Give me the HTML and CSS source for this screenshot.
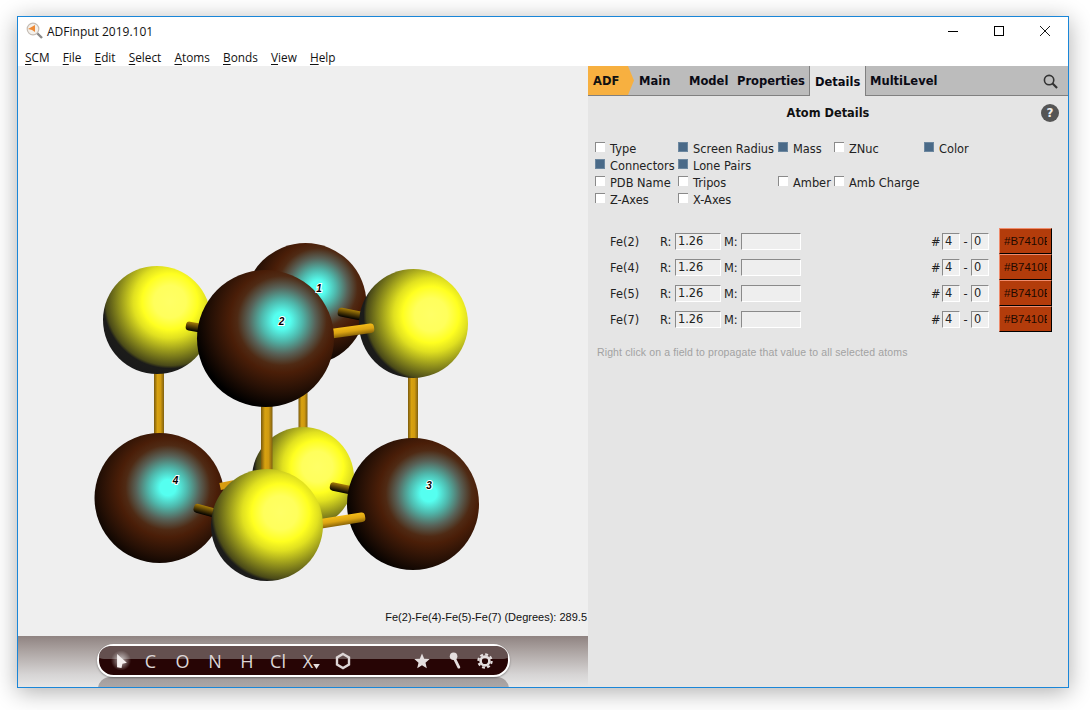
FILE: index.html
```html
<!DOCTYPE html>
<html lang="en">
<head>
<meta charset="utf-8">
<title>ADFinput 2019.101</title>
<link rel="stylesheet" href="styles.css">
</head>
<body>
<div class="window">
  <header class="titlebar">
    <svg class="appicon" viewBox="0 0 18 18" width="18" height="18">
      <line x1="10" y1="10" x2="16" y2="16" stroke="#8a8a8a" stroke-width="2.4"/>
      <circle cx="7" cy="7" r="5.8" fill="#f4f0ea" stroke="#c4bcb4" stroke-width="1.2"/>
      <polygon points="2,7 9,3 9,10 6,8" fill="#ee8a35"/>
    </svg>
    <span class="apptitle">ADFinput 2019.101</span>
    <div class="winctrls">
      <span class="winbtn"><svg viewBox="0 0 10 10" width="10" height="10"><line x1="0" y1="5.5" x2="10" y2="5.5" stroke="#000"/></svg></span>
      <span class="winbtn"><svg viewBox="0 0 10 10" width="10" height="10"><rect x=".5" y=".5" width="9" height="9" fill="none" stroke="#000"/></svg></span>
      <span class="winbtn"><svg viewBox="0 0 10 10" width="10" height="10"><path d="M0 0L10 10M10 0L0 10" stroke="#000" stroke-width=".9"/></svg></span>
    </div>
  </header>
  <nav class="menubar">
    <span><u>S</u>CM</span><span><u>F</u>ile</span><span><u>E</u>dit</span><span><u>S</u>elect</span><span><u>A</u>toms</span><span><u>B</u>onds</span><span><u>V</u>iew</span><span><u>H</u>elp</span>
  </nav>
  <main class="content">
    <section class="viewer">
      <div class="canvas">
        <svg class="molecule" viewBox="0 0 570 570" width="570" height="570">
          <defs>
            <radialGradient id="yel" cx=".62" cy=".33" r=".68">
              <stop offset="0" stop-color="#ffff66"/>
              <stop offset=".22" stop-color="#ffff5c"/>
              <stop offset=".38" stop-color="#ffff20"/>
              <stop offset=".5" stop-color="#e0e020"/>
              <stop offset=".68" stop-color="#96961c"/>
              <stop offset=".87" stop-color="#4a4a18"/>
              <stop offset=".91" stop-color="#1c1c1a"/>
              <stop offset="1" stop-color="#1a1a1a"/>
            </radialGradient>
            <radialGradient id="yelR" href="#yel" cx=".66" cy=".42"/>
            <radialGradient id="yelB" href="#yel" cx=".64" cy=".39"/>
            <radialGradient id="yelF" href="#yel" cx=".62" cy=".39"/>
            <radialGradient id="fe" cx=".62" cy=".37" r=".68">
              <stop offset="0" stop-color="#55fff0"/>
              <stop offset=".09" stop-color="#55fff0"/>
              <stop offset=".22" stop-color="#4fb8ac"/>
              <stop offset=".36" stop-color="#586258"/>
              <stop offset=".48" stop-color="#4f2a14"/>
              <stop offset=".56" stop-color="#4a1e08"/>
              <stop offset=".76" stop-color="#261005"/>
              <stop offset=".96" stop-color="#000"/>
            </radialGradient>
            <radialGradient id="fe1" href="#fe" cx=".6" cy=".37"/>
            <radialGradient id="fe3" href="#fe" cx=".62" cy=".42"/>
            <radialGradient id="fe4" href="#fe" cx=".565" cy=".42"/>
            <linearGradient id="stickV">
              <stop offset="0" stop-color="#7a5a0c"/>
              <stop offset=".35" stop-color="#d8a210"/>
              <stop offset=".65" stop-color="#d09a10"/>
              <stop offset="1" stop-color="#806010"/>
            </linearGradient>
            <linearGradient id="stickB" x1="0" y1="0" x2="0" y2="1">
              <stop offset="0" stop-color="#f4bc18"/>
              <stop offset=".5" stop-color="#dca412"/>
              <stop offset="1" stop-color="#8a6408"/>
            </linearGradient>
            <linearGradient id="stickD" x1="0" y1="0" x2="0" y2="1">
              <stop offset="0" stop-color="#a87e08"/>
              <stop offset=".55" stop-color="#4a3604"/>
              <stop offset="1" stop-color="#000"/>
            </linearGradient>
          </defs>
          <g transform="translate(-18 -66)">
            <circle cx="305.5" cy="304" r="61" fill="url(#fe1)"/>
            <rect x="154" y="368" width="10" height="70" fill="url(#stickV)"/>
            <rect x="408" y="372" width="10" height="70" fill="url(#stickV)"/>
            <rect x="298.500" y="390" width="9" height="42" fill="url(#stickV)"/>
            <circle cx="157" cy="320" r="54" fill="url(#yel)"/>
            <rect x="186" y="321" width="20" height="9" rx="3.500" fill="url(#stickD)" transform="rotate(10 186 325)"/>
            <circle cx="303" cy="478" r="51" fill="url(#yelB)"/>
            <rect x="261" y="400" width="11.500" height="75" fill="url(#stickV)"/>
            <rect x="338" y="307" width="30" height="9" rx="3.500" fill="url(#stickD)" transform="rotate(11 338 311)"/>
            <circle cx="413.500" cy="323.500" r="54.500" fill="url(#yelR)"/>
            <rect x="325" y="323" width="49" height="9.500" rx="3.500" fill="url(#stickB)" transform="rotate(-8 374 327)"/>
            <circle cx="265.500" cy="338.500" r="68.500" fill="url(#fe)"/>
            <rect x="330" y="482" width="28" height="8.500" rx="3.500" fill="url(#stickD)" transform="rotate(12 332 486)"/>
            <circle cx="413" cy="504" r="66" fill="url(#fe3)"/>
            <rect x="312" y="512" width="53" height="9.500" rx="3.500" fill="url(#stickB)" transform="rotate(-9 365 516)"/>
            <circle cx="159.500" cy="498" r="65" fill="url(#fe4)"/>
            <rect x="220" y="483" width="14" height="7" fill="#d89c10" transform="rotate(-12 220 486)"/>
            <rect x="194" y="503" width="30" height="9" rx="3.500" fill="url(#stickD)" transform="rotate(15 194 507)"/>
            <circle cx="267" cy="525" r="56" fill="url(#yelF)"/>
            <text class="atomno" x="319" y="292">1</text>
            <text class="atomno" x="281.500" y="325">2</text>
            <text class="atomno" x="429" y="489">3</text>
            <text class="atomno" x="175.500" y="484">4</text>
          </g>
        </svg>
        <p class="status">Fe(2)-Fe(4)-Fe(5)-Fe(7) (Degrees): 289.5</p>
      </div>
      <div class="toolbar">
        <div class="pill-reflect"></div>
        <div class="pill">
          <span class="tool tool-arrow"><svg viewBox="0 0 14 18" width="13" height="16"><polygon points="2,1 13,11 8,12 7,17 2,16" fill="#f4efef"/></svg></span>
          <span class="tool">C</span>
          <span class="tool">O</span>
          <span class="tool">N</span>
          <span class="tool">H</span>
          <span class="tool">Cl</span>
          <span class="tool tool-x">X<svg class="tri" viewBox="0 0 8 6" width="7" height="5"><polygon points="0,0 8,0 4,6" fill="#e4dede"/></svg></span>
          <span class="tool"><svg viewBox="0 0 16 18" width="16" height="18"><polygon points="8,2 14,5.500 14,12.500 8,16 2,12.500 2,5.500" fill="none" stroke="#ddd6d6" stroke-width="2.400"/></svg></span>
          <span class="tool-gap"></span>
          <span class="tool"><svg viewBox="0 0 16 16" width="16" height="16"><polygon points="8,.5 10.200,5.700 15.700,6.100 11.500,9.700 12.800,15.200 8,12.300 3.200,15.200 4.500,9.700 .3,6.100 5.800,5.700" fill="#e4dede"/></svg></span>
          <span class="tool"><svg viewBox="0 0 12 18" width="12" height="17"><line x1="5" y1="6" x2="10" y2="16" stroke="#e4dede" stroke-width="3" stroke-linecap="round"/><circle cx="4.500" cy="4.500" r="4" fill="#e4dede"/></svg></span>
          <span class="tool"><svg viewBox="0 0 16 16" width="16" height="16"><circle cx="8" cy="8" r="4.400" fill="none" stroke="#e4dede" stroke-width="2.600"/><circle cx="8" cy="8" r="6.600" fill="none" stroke="#e4dede" stroke-width="2.200" stroke-dasharray="2.900 2.280"/></svg></span>
        </div>
      </div>
    </section>
    <section class="panel">
      <div class="tabs">
        <span class="tab tab-adf">ADF</span>
        <span class="tab tab-main">Main</span>
        <span class="tab tab-model">Model</span>
        <span class="tab tab-props">Properties</span>
        <span class="tab tab-details">Details</span>
        <span class="tab tab-multi">MultiLevel</span>
        <svg class="search" viewBox="0 0 16 16" width="15" height="15"><circle cx="6.500" cy="6.500" r="5" fill="none" stroke="#333" stroke-width="1.700"/><line x1="10.200" y1="10.200" x2="15" y2="15" stroke="#333" stroke-width="2.200"/></svg>
      </div>
      <div class="heading">
        <span></span>
        <h1>Atom Details</h1>
        <span class="help">?</span>
      </div>
      <div class="checks">
        <label class="check"><i class="box"></i>Type</label>
        <label class="check"><i class="box on"></i>Screen Radius</label>
        <label class="check"><i class="box on"></i>Mass</label>
        <label class="check"><i class="box"></i>ZNuc</label>
        <label class="check"><i class="box on"></i>Color</label>
        <label class="check"><i class="box on"></i>Connectors</label>
        <label class="check"><i class="box on"></i>Lone Pairs</label>
        <span></span><span></span><span></span>
        <label class="check"><i class="box"></i>PDB Name</label>
        <label class="check"><i class="box"></i>Tripos</label>
        <label class="check"><i class="box"></i>Amber</label>
        <label class="check"><i class="box"></i>Amb Charge</label>
        <span></span>
        <label class="check"><i class="box"></i>Z-Axes</label>
        <label class="check"><i class="box"></i>X-Axes</label>
      </div>
      <div class="atoms">
        <div class="atom"><span class="lbl a-name">Fe(2)</span><span class="lbl a-r">R:</span><span class="field f-r">1.26</span><span class="lbl a-m">M:</span><span class="field f-m"></span><span class="lbl a-hash">#</span><span class="field f-n">4</span><span class="lbl a-dash">-</span><span class="field f-n">0</span><span class="swatch"><span>#B7410E</span></span></div>
        <div class="atom"><span class="lbl a-name">Fe(4)</span><span class="lbl a-r">R:</span><span class="field f-r">1.26</span><span class="lbl a-m">M:</span><span class="field f-m"></span><span class="lbl a-hash">#</span><span class="field f-n">4</span><span class="lbl a-dash">-</span><span class="field f-n">0</span><span class="swatch"><span>#B7410E</span></span></div>
        <div class="atom"><span class="lbl a-name">Fe(5)</span><span class="lbl a-r">R:</span><span class="field f-r">1.26</span><span class="lbl a-m">M:</span><span class="field f-m"></span><span class="lbl a-hash">#</span><span class="field f-n">4</span><span class="lbl a-dash">-</span><span class="field f-n">0</span><span class="swatch"><span>#B7410E</span></span></div>
        <div class="atom"><span class="lbl a-name">Fe(7)</span><span class="lbl a-r">R:</span><span class="field f-r">1.26</span><span class="lbl a-m">M:</span><span class="field f-m"></span><span class="lbl a-hash">#</span><span class="field f-n">4</span><span class="lbl a-dash">-</span><span class="field f-n">0</span><span class="swatch"><span>#B7410E</span></span></div>
      </div>
      <p class="hint">Right click on a field to propagate that value to all selected atoms</p>
    </section>
  </main>
</div>
</body>
</html>
```
FILE: styles.css
```css
* { box-sizing: border-box; }
html, body { margin: 0; height: 100%; background: #fff; overflow: hidden; }
body { padding: 16px 21px 0 17px; font-family: "DejaVu Sans", sans-serif; font-size: 11.4px; color: #111; }

.window {
  width: 1052px; height: 672px; display: flex; flex-direction: column;
  background: #fff; border: 1px solid #1a86d8;
  box-shadow: 0 4px 22px rgba(0,0,0,.32);
}

.titlebar { height: 29px; display: flex; align-items: center; padding-left: 8px; flex: none; }
.appicon { flex: none; margin-top: -1px; }
.apptitle { margin-left: 3px; font: 12px "Open Sans", sans-serif; color: #111; }
.winctrls { margin-left: auto; display: flex; align-items: center; }
.winbtn { width: 46px; height: 29px; display: flex; align-items: center; justify-content: center; margin-top: -1px; }
.winbtn svg { display: block; }

.menubar { height: 20px; flex: none; display: flex; align-items: center; gap: 13.200px; padding: 1px 0 0 7px; font: 11.800px "Open Sans", sans-serif; color: #111; }
.menubar u { text-underline-offset: 2px; }

.content { flex: 1; display: flex; min-height: 0; }

.viewer { width: 570px; flex: none; display: flex; flex-direction: column; }
.canvas { height: 570px; flex: none; background: #efefef; position: relative; display: flex; align-items: flex-end; justify-content: flex-end; }
.molecule { position: absolute; left: 0; top: 0; display: block; }
.status { margin: 0 1px 13px 0; position: relative; font: 11px "Liberation Sans", sans-serif; color: #111; white-space: nowrap; }
.atomno { font: italic bold 10px "Liberation Sans", sans-serif; fill: #000; stroke: #fff; stroke-width: 2px; paint-order: stroke; text-anchor: middle; }

.toolbar { flex: 1; position: relative; background: linear-gradient(#8f8381, #a89f9d 25%, #d6d4d4 75%, #e6e6e6); padding: 8px 0 0 79px; overflow: hidden; }
.pill {
  width: 413px; height: 33px; position: relative; display: grid;
  grid-template-columns: 28px 31px 33px 32px 32px 30px 30px 40px 45px 28px 38px 22px;
  padding-left: 8px; align-items: center;
  border: 2px solid #fff; border-radius: 17px;
  background: #270505;
  box-shadow: 0 1px 2px rgba(0,0,0,.35);
  font: 18px "Open Sans", sans-serif; color: #dcd6d6;
}
.pill::before { content: ""; position: absolute; left: 0; right: 0; top: 0; height: 13px; background: #64504f; border-radius: 15px 15px 6px 6px / 13px 13px 3px 3px; }
.pill-reflect { position: absolute; left: 80px; top: 41px; width: 411px; height: 24px; border-radius: 14px; background: linear-gradient(#a19b9b, #bbb8b8); }
.tool { display: flex; align-items: center; justify-content: center; line-height: 1; height: 29px; position: relative; }
.tool svg { display: block; }
.tool-arrow { background: radial-gradient(circle at 50% 50%, rgba(255,255,255,.7), rgba(255,255,255,0) 50%); }
.tri { position: absolute; right: 3px; top: 18px; }

.panel { flex: 1; background: #e5e5e5; display: flex; flex-direction: column; min-width: 0; }
.tabs { height: 30px; flex: none; display: flex; align-items: stretch; background: #bcbcbc; border-bottom: 1px solid #808080; position: relative; font-weight: 700; font-size: 11.500px; color: #0a0a14; }
.tab { display: flex; align-items: center; padding-left: 5px; padding-top: 1px; flex: none; }
.tab-adf { width: 46px; background: #f7b040; clip-path: polygon(0 0, 40px 0, 46px 50%, 40px 100%, 0 100%); color: #111; }
.tab-main { width: 50px; }
.tab-model { width: 48px; }
.tab-props { width: 77px; }
.tab-details { width: 57px; background: #e5e5e5; border-left: 1px solid #808080; border-right: 1px solid #808080; margin-bottom: -1px; }
.tab-multi { padding-left: 4px; }
.search { position: absolute; right: 10px; top: 8px; }

.heading { display: grid; grid-template-columns: 1fr auto 1fr; align-items: center; height: 34px; flex: none; padding: 0 9px; }
.heading h1 { margin: 0; font-size: 11.400px; font-weight: 700; color: #111; }
.help { justify-self: end; width: 18px; height: 18px; border-radius: 50%; background: #555; color: #eee; font-weight: 700; font-size: 12px; display: flex; align-items: center; justify-content: center; }

.checks { display: grid; grid-template-columns: 83px 100px 56px 90px auto; grid-auto-rows: 17px; padding: 10px 0 0 7px; justify-content: start; flex: none; }
.check { display: flex; align-items: center; gap: 5px; white-space: nowrap; color: #222; }
.box { width: 10px; height: 10px; flex: none; background: #fff; border-top: 1px solid #8a8a8a; border-left: 1px solid #8a8a8a; margin-top: -3px; }
.box.on { background: #4a6a88; border: 1px solid #6c879f; }

.atoms { margin-top: 20px; display: flex; flex-direction: column; padding-right: 16px; flex: none; }
.atom { height: 26px; display: flex; align-items: center; padding-left: 22px; color: #222; }
.lbl { padding-top: 2px; }
.a-name { width: 50px; }
.a-r { width: 15px; }
.a-m { width: 17px; margin-left: 3px; }
.a-hash { margin-left: auto; width: 11px; }
.a-dash { width: 11px; text-align: center; }
.field { height: 17px; background: #eee; border: 1px solid; border-color: #8a8a8a #fff #fff #8a8a8a; padding-left: 2px; line-height: 15px; flex: none; }
.f-r { width: 46px; }
.f-m { width: 60px; }
.f-n { width: 18px; background: #efefef; }
.swatch { width: 53px; height: 26px; margin-left: 10px; background: #b33c0b; border: 1px solid; border-color: #f08c6c #000 #000 #f08c6c; padding: 0 3px 0 4px; display: flex; align-items: center; color: #1e0a00; overflow: hidden; flex: none; white-space: nowrap; font: 11.500px "Liberation Sans", sans-serif; }
.swatch span { display: block; width: 43px; overflow: hidden; }

.hint { margin: 14px 0 0 9px; font: 10.500px "Liberation Sans", sans-serif; letter-spacing: .12px; color: #a2a2a2; white-space: nowrap; }
```
